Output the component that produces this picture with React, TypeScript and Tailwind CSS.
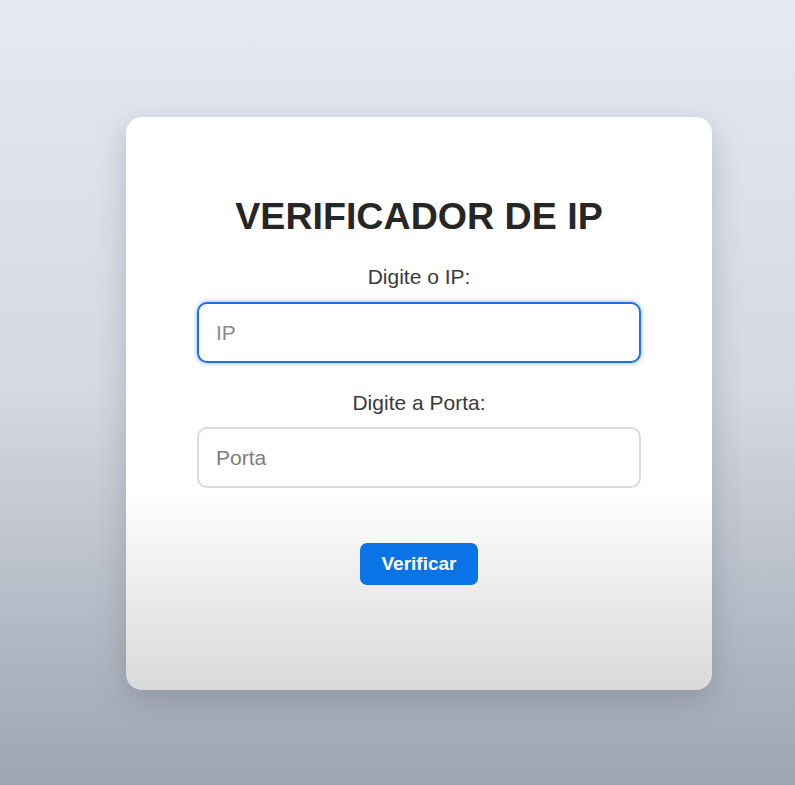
import React, { useState } from 'react';

const App: React.FC = () => {
  const [ip, setIp] = useState('');
  const [porta, setPorta] = useState('');

  return (
    <div
      className="w-full min-h-[785px] flex justify-center pt-[117px] bg-gradient-to-b from-[#e6e9f1] via-[#d3d8e1] to-[#9ea5b1]"
      style={{ fontFamily: '"Liberation Sans", Arial, sans-serif' }}
    >
      <div className="w-[586px] h-[573px] ml-[43px] rounded-[16px] bg-gradient-to-b from-white via-white via-65% to-[#d9d9d9] shadow-[0_10px_30px_rgba(60,70,90,0.25)] flex flex-col items-center pt-[78px] px-[71px]">
        <h1 className="text-[37.6px] leading-[43px] font-bold text-[#262626]">
          VERIFICADOR DE IP
        </h1>

        <label className="mt-[26px] text-[21px] leading-[25px] text-[#3a3a3a]">
          Digite o IP:
        </label>
        <input
          value={ip}
          onChange={(e) => setIp(e.target.value)}
          placeholder="IP"
          className="mt-[13px] w-full h-[61px] rounded-[10px] border-2 border-[#1f6fe0] shadow-[0_0_5px_rgba(31,111,224,0.55)] pl-[17px] text-[21px] text-[#333] placeholder:text-[#8a8a8a] outline-none bg-white"
        />

        <label className="mt-[27px] text-[21px] leading-[25px] text-[#3a3a3a]">
          Digite a Porta:
        </label>
        <input
          value={porta}
          onChange={(e) => setPorta(e.target.value)}
          placeholder="Porta"
          className="mt-[12px] w-full h-[61px] rounded-[10px] border-2 border-[#dadada] pl-[17px] text-[21px] text-[#333] placeholder:text-[#7d7d7d] outline-none bg-white"
        />

        <button className="mt-[55px] w-[118px] h-[42px] rounded-[7px] bg-[#0a73e6] text-white font-bold text-[19px]">
          Verificar
        </button>
      </div>
    </div>
  );
};

export default App;
